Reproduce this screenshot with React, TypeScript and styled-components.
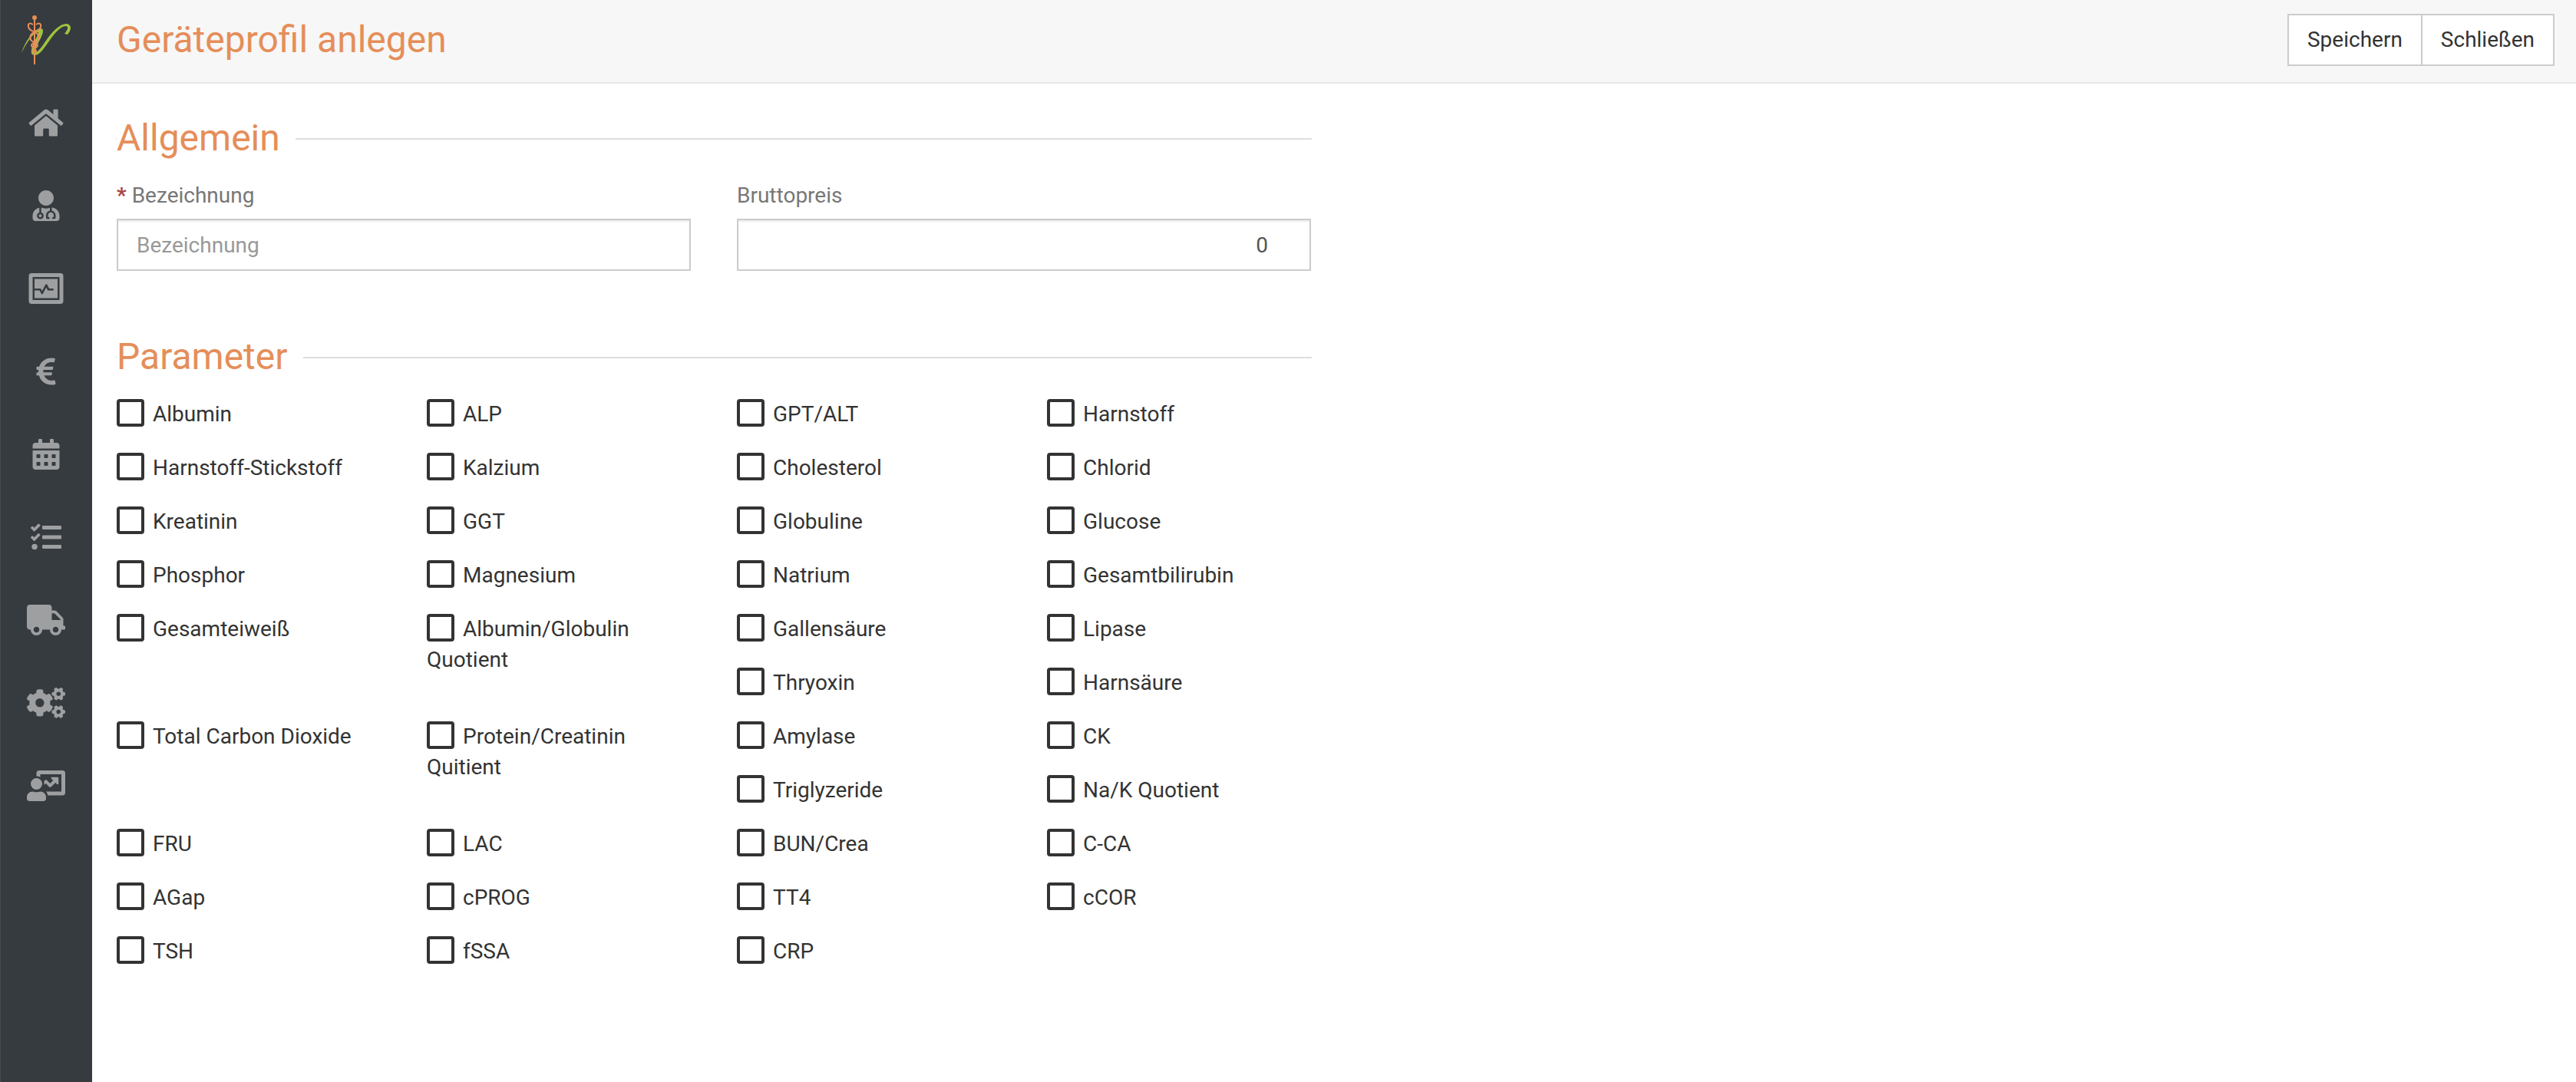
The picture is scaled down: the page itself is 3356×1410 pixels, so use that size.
import React from "react";
import styled, { createGlobalStyle } from "styled-components";
import {
  FaHome,
  FaUserMd,
  FaEuroSign,
  FaCalendarAlt,
  FaTasks,
  FaTruck,
  FaCogs,
} from "react-icons/fa";

const color = {
  accent: "#e58e5a",
  text: "#333333",
  muted: "#777777",
  input: "#555555",
  placeholder: "#999999",
  border: "#cccccc",
  rule: "#dddddd",
  sidebar: "#363b3f",
  sidebarEdge: "#474c50",
  icon: "#9d9fa1",
  required: "#a94442",
  green: "#9fc33f",
};

const GlobalStyle = createGlobalStyle`
  *, *::before, *::after { box-sizing: border-box; }
  body {
    margin: 0;
    background: #ffffff;
    color: ${color.text};
    font-family: Roboto, "Liberation Sans", sans-serif;
    font-size: 28px;
    line-height: 40px;
  }
`;

const Layout = styled.div`
  display: flex;
  min-height: 100vh;
`;

const Sidebar = styled.nav`
  flex: none;
  display: flex;
  flex-direction: column;
  width: 120px;
  background: ${color.sidebar};
  box-shadow: inset 1px 0 0 ${color.sidebarEdge};
`;

const LogoLink = styled.a`
  display: flex;
  justify-content: center;
  height: 106px;
  padding-top: 20px;
`;

const NavLink = styled.a`
  display: flex;
  align-items: center;
  justify-content: center;
  height: 108px;
  color: ${color.icon};

  svg {
    width: 50px;
    height: 40px;
  }
`;

const Main = styled.main`
  flex: 1;
  min-width: 0;
`;

const Header = styled.header`
  display: flex;
  align-items: flex-start;
  justify-content: space-between;
  height: 109px;
  padding: 18px 28px 0 32px;
  background: #f7f7f7;
  border-bottom: 2px solid #e7e7e7;
`;

const Title = styled.h1`
  margin: 0;
  color: ${color.accent};
  font-size: 48px;
  font-weight: 400;
  line-height: 68px;
`;

const ButtonGroup = styled.div`
  display: flex;
`;

const Button = styled.button`
  height: 68px;
  padding: 0 24px;
  background: #ffffff;
  border: 2px solid ${color.border};
  color: ${color.text};
  font: inherit;

  & + & {
    margin-left: -2px;
  }
`;

const Form = styled.form`
  display: flex;
  flex-direction: column;
  gap: 75px;
  width: 50%;
  min-width: 1200px;
  max-width: 1590px;
  padding: 36px 0 0 30px;
`;

const Section = styled.fieldset`
  min-width: 0;
  margin: 0;
  padding: 0;
  border: 2px solid transparent;
  border-top-color: ${color.rule};
`;

const Legend = styled.legend`
  padding: 0 20px 2px 0;
  color: ${color.accent};
  font-size: 48px;
  line-height: 70px;
`;

const Fields = styled.div`
  display: grid;
  grid-template-columns: repeat(2, 1fr);
  gap: 60px;
  padding-top: 18px;
`;

const Field = styled.div`
  display: flex;
  flex-direction: column;
  gap: 10px;
`;

const FieldLabel = styled.label`
  color: ${color.muted};
`;

const Required = styled.span`
  color: ${color.required};
  font-weight: 700;
`;

const TextInput = styled.input<{ $numeric?: boolean }>`
  width: 100%;
  height: 68px;
  padding: ${(p) => (p.$numeric ? "0 54px 0 24px" : "0 24px")};
  background: #ffffff;
  border: 2px solid ${color.border};
  border-radius: 0;
  box-shadow: inset 0 2px 2px rgba(0, 0, 0, 0.075);
  color: ${color.input};
  font: inherit;
  text-align: ${(p) => (p.$numeric ? "right" : "left")};

  &::placeholder {
    color: ${color.placeholder};
    opacity: 1;
  }
`;

const Parameters = styled.div`
  display: grid;
  grid-template-columns: repeat(4, 1fr);
  grid-auto-rows: minmax(70px, auto);
  column-gap: 60px;
  padding-top: 18px;
`;

const Option = styled.label<{ $rows: number }>`
  grid-row: span ${(p) => p.$rows};
`;

const Checkbox = styled.input`
  appearance: none;
  width: 36px;
  height: 36px;
  margin: 0 11px 0 0;
  border: 4px solid ${color.text};
  border-radius: 4px;
  vertical-align: -7px;

  &:checked {
    background: ${color.text};
  }
`;

const Logo = () => (
  <svg width="64" height="64" viewBox="0 0 64 64" fill="none">
    <path
      d="M0 49C2 42 7 32 13 25C17 20 21 17 25 17C28 17 29 20 27 25C25 31 20 38 18 44C18 47 18 48 19 48C23 47 28 38 37 26C46 15 53 11 59 11C65 12 66 18 60 25L56 24C60 19 62 15 58 14C53 14 48 18 40 28C31 40 25 52 17 52C12 52 12 47 14 41C16 34 21 28 22 22C17 21 8 33 0 49Z"
      fill={color.green}
    />
    <path d="M17 4V64" stroke={color.accent} strokeWidth="2" />
    <ellipse cx="17" cy="3" rx="3" ry="3" fill={color.accent} />
    <path
      d="M15 12C11 9 8 11 9 15C10 20 15 20 17 22C23 24 24 30 21 33C18 35 14 35 13 39C13 43 19 43 19 47L17 51M19 12C23 9 26 11 25 15C24 20 19 20 17 22C11 24 10 30 13 33C16 35 20 35 21 39C21 43 15 43 15 47L17 51"
      stroke={color.accent}
      strokeWidth="2"
    />
  </svg>
);

const MonitorIcon = () => (
  <svg viewBox="0 0 576 512" fill="currentColor">
    <path
      fillRule="evenodd"
      d="M48 0H528A48 48 0 0 1 576 48V464A48 48 0 0 1 528 512H48A48 48 0 0 1 0 464V48A48 48 0 0 1 48 0ZM64 64V448H512V64Z"
    />
    <path d="M96 96H480V416H96V288H182L208 342C215 354 230 354 236 342L290 236L309 276C312 284 318 288 325 288H400A16 16 0 0 0 400 256H340L306 190C299 178 284 178 278 190L222 298L206 265C203 259 198 256 192 256H96Z" />
  </svg>
);

const UserChartIcon = () => (
  <svg viewBox="0 0 640 512" fill="currentColor">
    <circle cx="160" cy="224" r="96" />
    <path d="M224 352C190 364 130 364 96 352C40 352 0 396 0 448V464A48 48 0 0 0 48 512H272A48 48 0 0 0 320 464V448C320 396 280 352 224 352Z" />
    <path d="M592 0H208A48 48 0 0 0 160 49V96C184 96 206 103 224 113V64H576V352H320C336 370 345 390 349 416H592A48 48 0 0 0 640 368V48A48 48 0 0 0 592 0Z" />
    <path d="M416 112H512A16 16 0 0 1 528 128V216C528 234 510 238 500 228L476 204L402 274A20 20 0 0 1 374 274L318 218L288 240V176L306 162A20 20 0 0 1 334 162L388 216L438 166L412 140C402 130 404 112 416 112Z" />
  </svg>
);

const navItems = [
  { label: "Startseite", Icon: FaHome },
  { label: "Ärzte", Icon: FaUserMd },
  { label: "Geräte", Icon: MonitorIcon },
  { label: "Preise", Icon: FaEuroSign },
  { label: "Kalender", Icon: FaCalendarAlt },
  { label: "Aufgaben", Icon: FaTasks },
  { label: "Lieferungen", Icon: FaTruck },
  { label: "Einstellungen", Icon: FaCogs },
  { label: "Auswertungen", Icon: UserChartIcon },
];

type Parameter = { name: string; rows?: number };

const parameters: Parameter[] = [
  { name: "Albumin" },
  { name: "ALP" },
  { name: "GPT/ALT" },
  { name: "Harnstoff" },
  { name: "Harnstoff-Stickstoff" },
  { name: "Kalzium" },
  { name: "Cholesterol" },
  { name: "Chlorid" },
  { name: "Kreatinin" },
  { name: "GGT" },
  { name: "Globuline" },
  { name: "Glucose" },
  { name: "Phosphor" },
  { name: "Magnesium" },
  { name: "Natrium" },
  { name: "Gesamtbilirubin" },
  { name: "Gesamteiweiß", rows: 2 },
  { name: "Albumin/Globulin Quotient", rows: 2 },
  { name: "Gallensäure" },
  { name: "Lipase" },
  { name: "Thryoxin" },
  { name: "Harnsäure" },
  { name: "Total Carbon Dioxide", rows: 2 },
  { name: "Protein/Creatinin Quitient", rows: 2 },
  { name: "Amylase" },
  { name: "CK" },
  { name: "Triglyzeride" },
  { name: "Na/K Quotient" },
  { name: "FRU" },
  { name: "LAC" },
  { name: "BUN/Crea" },
  { name: "C-CA" },
  { name: "AGap" },
  { name: "cPROG" },
  { name: "TT4" },
  { name: "cCOR" },
  { name: "TSH" },
  { name: "fSSA" },
  { name: "CRP" },
];

export default function App() {
  return (
    <>
      <GlobalStyle />
      <Layout>
        <Sidebar>
          <LogoLink href="#" aria-label="Logo">
            <Logo />
          </LogoLink>
          {navItems.map(({ label, Icon }) => (
            <NavLink key={label} href="#" aria-label={label}>
              <Icon />
            </NavLink>
          ))}
        </Sidebar>
        <Main>
          <Header>
            <Title>Geräteprofil anlegen</Title>
            <ButtonGroup>
              <Button type="submit" form="profile">
                Speichern
              </Button>
              <Button type="button">Schließen</Button>
            </ButtonGroup>
          </Header>
          <Form id="profile" onSubmit={(e) => e.preventDefault()}>
            <Section>
              <Legend>Allgemein</Legend>
              <Fields>
                <Field>
                  <FieldLabel htmlFor="name">
                    <Required>*</Required> Bezeichnung
                  </FieldLabel>
                  <TextInput id="name" placeholder="Bezeichnung" />
                </Field>
                <Field>
                  <FieldLabel htmlFor="price">Bruttopreis</FieldLabel>
                  <TextInput id="price" inputMode="decimal" defaultValue="0" $numeric />
                </Field>
              </Fields>
            </Section>
            <Section>
              <Legend>Parameter</Legend>
              <Parameters>
                {parameters.map(({ name, rows = 1 }) => (
                  <Option key={name} $rows={rows}>
                    <Checkbox type="checkbox" />
                    {name}
                  </Option>
                ))}
              </Parameters>
            </Section>
          </Form>
        </Main>
      </Layout>
    </>
  );
}
